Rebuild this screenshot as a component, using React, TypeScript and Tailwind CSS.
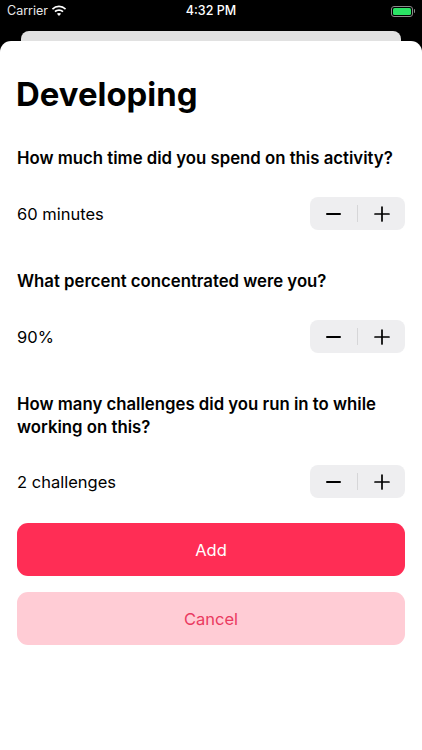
import React from 'react';

const fontStack = "font-['Inter','Noto_Sans',sans-serif]";

const Stepper: React.FC = () => (
  <div className="flex h-[33px] w-[95px] items-center rounded-[8px] bg-[#eeeef0]">
    <div className="flex flex-1 items-center justify-center">
      <div className="h-[2px] w-[15px] rounded-full bg-black" />
    </div>
    <div className="h-[17px] w-px bg-[#d6d6d8]" />
    <div className="flex flex-1 items-center justify-center">
      <svg width="16" height="16" viewBox="0 0 16 16">
        <path d="M8 1v14M1 8h14" stroke="#000" strokeWidth="1.7" strokeLinecap="round" />
      </svg>
    </div>
  </div>
);

const ValueRow: React.FC<{ label: string }> = ({ label }) => (
  <div className="flex items-center justify-between">
    <span className="pt-[1px] text-[16.5px] leading-[32px] text-black">{label}</span>
    <Stepper />
  </div>
);

const Question: React.FC<{ text: string }> = ({ text }) => (
  <p className="text-[16.75px] font-semibold leading-[23px] text-black">{text}</p>
);

export default function App() {
  return (
    <div className={`flex h-[750px] w-[422px] flex-col overflow-hidden bg-black ${fontStack}`}>
      {/* status bar */}
      <div className="flex h-[31px] items-center pb-[9px] pl-[7px] pr-[7px] text-[12.5px] text-white">
        <div className="flex flex-1 items-center gap-[3px]">
          <span className="font-normal text-[#e8e8e8]">Carrier</span>
          <svg width="16" height="12" viewBox="0 0 16 12" fill="#fff">
            <path d="M8 2.3c2.3 0 4.4.9 6 2.4l1.1-1.2A10.3 10.3 0 0 0 8 .6 10.3 10.3 0 0 0 .9 3.5L2 4.7a8.7 8.7 0 0 1 6-2.4z" />
            <path d="M8 5.9c1.3 0 2.5.5 3.4 1.4l1.2-1.2A6.6 6.6 0 0 0 8 4.2c-1.8 0-3.4.7-4.6 1.9l1.2 1.2c.9-.9 2.1-1.4 3.4-1.4z" />
            <path d="M8 7.9c-.8 0-1.5.3-2.1.8L8 11l2.1-2.3c-.6-.5-1.3-.8-2.1-.8z" />
          </svg>
        </div>
        <span className="font-medium">4:32 PM</span>
        <div className="flex flex-1 items-center justify-end gap-px">
          <div className="h-[11px] w-[22px] rounded-[3px] border border-[#8a8a8a] p-px">
            <div className="h-full w-full rounded-[1.5px] bg-[#2ae364]" />
          </div>
          <div className="h-[4px] w-px rounded-r-sm bg-[#8a8a8a]" />
        </div>
      </div>

      {/* card behind the sheet */}
      <div className="mx-[21px] h-[10px] rounded-t-[8px] bg-[#e1e1e1]" />

      {/* sheet */}
      <div className="flex flex-1 flex-col rounded-t-[11px] bg-white px-[17px]">
        <h1 className="mt-[28px] -ml-px text-[32.9px] font-bold leading-[50px] text-black">Developing</h1>

        <div className="mt-[28px]">
          <Question text="How much time did you spend on this activity?" />
        </div>
        <div className="mt-[27px]">
          <ValueRow label="60 minutes" />
        </div>

        <div className="mt-[40px]">
          <Question text="What percent concentrated were you?" />
        </div>
        <div className="mt-[27px]">
          <ValueRow label="90%" />
        </div>

        <div className="mt-[40px]">
          <Question text="How many challenges did you run in to while working on this?" />
        </div>
        <div className="mt-[26px]">
          <ValueRow label="2 challenges" />
        </div>

        <button className="mt-[25px] h-[53px] w-full rounded-[11px] bg-[#ff2d55] pt-[1px] text-[16.5px] text-white">Add</button>
        <button className="mt-[16px] h-[53px] w-full rounded-[11px] bg-[#ffccd5] pt-[2px] text-[16.5px] text-[#ea3a60]">Cancel</button>
      </div>
    </div>
  );
}
